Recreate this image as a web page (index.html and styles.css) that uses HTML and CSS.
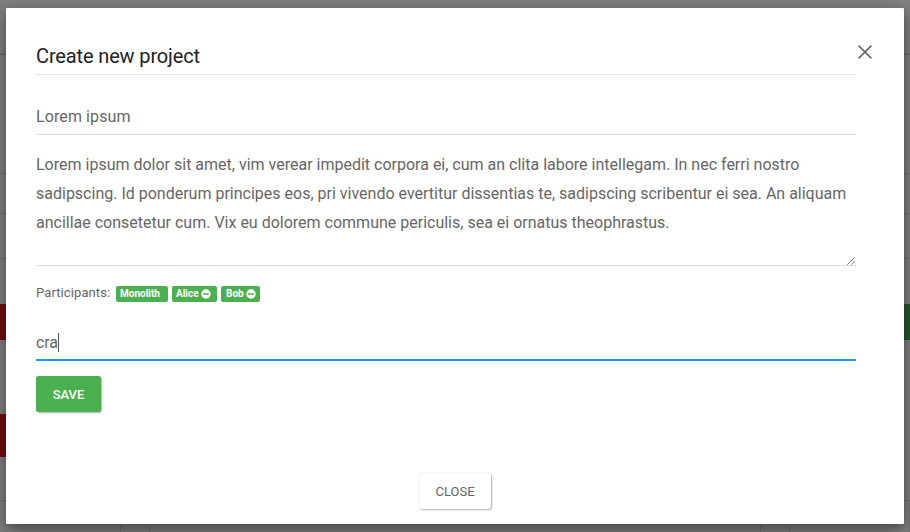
FILE: index.html
```html
<!DOCTYPE html>
<html lang="en">
<head>
<meta charset="utf-8">
<title>Create new project</title>
<link rel="stylesheet" href="styles.css">
</head>
<body>
<div class="page">
  <div class="band band-nav"></div>
  <div class="band band-head"></div>
  <div class="band band-row"></div>
  <div class="band band-filter"></div>
  <div class="band band-gap"></div>
  <div class="actions"><span class="danger"></span><span class="success"></span></div>
  <div class="band-space"></div>
  <div class="actions actions-tall"><span class="danger"></span></div>
  <div class="band band-last"></div>
  <div class="panels"><div class="panel"></div><div class="panel"></div><div class="panel"></div></div>
</div>
<main class="modal" role="dialog">
  <header class="header">
    <h1 class="title">Create new project</h1>
    <button class="dismiss" aria-label="Close">
      <svg width="14" height="14" viewBox="0 0 14 14"><path d="M.6.6 13.4 13.4M13.4.6.6 13.4"/></svg>
    </button>
  </header>
  <div class="form">
    <div class="field name">Lorem ipsum</div>
    <div class="field description">Lorem ipsum dolor sit amet, vim verear impedit corpora ei, cum an clita labore intellegam. In nec ferri nostro<br>sadipscing. Id ponderum principes eos, pri vivendo evertitur dissentias te, sadipscing scribentur ei sea. An aliquam<br>ancillae consetetur cum. Vix eu dolorem commune periculis, sea ei ornatus theophrastus.
      <svg class="grip" width="8" height="8" viewBox="0 0 8 8"><path d="M.3 7.7 7.7.3M4.3 7.7l3.4-3.4"/></svg>
    </div>
    <div class="participants">
      <span class="caption">Participants:</span>
      <span class="tag tag-owner">Monolith</span>
      <span class="tag tag-alice">Alice <svg width="10" height="10" viewBox="0 0 10 10"><circle cx="5" cy="5" r="4.7"/><path d="M2.2 5h5.6"/></svg></span>
      <span class="tag tag-bob">Bob <svg width="10" height="10" viewBox="0 0 10 10"><circle cx="5" cy="5" r="4.7"/><path d="M2.2 5h5.6"/></svg></span>
    </div>
    <div class="field search">cra<span class="caret"></span></div>
    <button class="btn save">SAVE</button>
  </div>
  <footer class="footer"><button class="btn close">CLOSE</button></footer>
</main>
</body>
</html>
```
FILE: styles.css
```css
* { box-sizing: border-box; }
body {
  margin: 0;
  height: 532px;
  overflow: hidden;
  position: relative;
  background: #808080;
  font-family: Roboto, sans-serif;
  font-size: 13px;
  letter-spacing: .1px;
  color: #666;
}
.page { height: 532px; display: flex; flex-direction: column; }
.band { border-bottom: 1px solid #6e6e6e; }
.band-nav { height: 55px; border-bottom-width: 2px; }
.band-head { height: 119px; }
.band-row { height: 40px; }
.band-filter { height: 45px; }
.band-gap { height: 45px; border: 0; }
.actions { height: 36px; display: flex; justify-content: space-between; }
.actions-tall { height: 43px; }
.danger, .success { width: 40px; }
.danger { background: #720c0c; }
.success { background: #26582a; }
.band-space { height: 74px; }
.band-last { height: 44px; }
.panels { flex: 1; display: grid; grid-template-columns: 121px 612px 121px; gap: 28px; }
.panel { border-right: 1px solid #727272; }
.panel + .panel { border-left: 1px solid #727272; }
.modal {
  position: absolute;
  inset: 8px 6px;
  background: #fff;
  border-radius: 1px;
  box-shadow: 0 5px 15px rgba(0, 0, 0, .5);
  display: flex;
  flex-direction: column;
  padding: 30px 48px 15px 30px;
}
.header { height: 37px; border-bottom: 1px solid #e5e5e5; display: flex; align-items: center; justify-content: space-between; }
.title { margin: 0; padding-bottom: 1px; font-size: 20px; font-weight: 400; letter-spacing: -.14px; color: #212121; }
button { font: inherit; letter-spacing: inherit; border: 0; }
.dismiss { width: 14px; height: 14px; padding: 0; background: none; margin: 0 -16px 9px 0; }
svg { display: block; fill: none; stroke: #666; }
.dismiss svg { stroke-width: 1.6; stroke: #666; }
.form { flex: 1; display: flex; flex-direction: column; }
.field { font-size: 16px; letter-spacing: .1px; border-bottom: 1px solid #ddd; white-space: nowrap; }
.name { height: 37px; margin-top: 23px; padding-top: 1px; line-height: 36px; }
.description { position: relative; height: 131px; padding-top: 15px; line-height: 29px; letter-spacing: 0; }
.grip { position: absolute; right: 1px; bottom: 0; stroke-width: .9; }
.participants { height: 16px; margin-top: 20px; display: flex; gap: 4px; align-items: center; }
.caption { width: 76px; line-height: 16px; position: relative; top: -1px; }
.tag {
  height: 16px;
  padding: 0 5px 0 4px;
  border-radius: 2px;
  background: #4caf50;
  color: #fff;
  font-size: 10px;
  font-weight: 700;
  letter-spacing: 0;
  line-height: 16px;
  display: flex;
  align-items: center;
  gap: 2px;
}
.tag-owner { width: 52px; }
.tag-alice { width: 45px; }
.tag-bob { width: 39px; padding: 0 4px 0 5px; }
.tag svg circle { fill: #fff; stroke: none; }
.tag svg path { stroke: #4caf50; stroke-width: 1.6; }
.search { height: 37px; margin-top: 22px; padding-top: 2px; border-bottom: 2px solid #2196f3; letter-spacing: -.1px; display: flex; align-items: center; }
.caret { width: 1px; height: 19px; background: #555; }
.btn { height: 36px; border-radius: 3px; box-shadow: 1px 1px 2px rgba(0, 0, 0, .3), 0 0 1px rgba(0, 0, 0, .25); padding: 0; }
.save { width: 65px; margin-top: 15px; background: #4caf50; color: #fff; font-weight: 500; letter-spacing: 0; }
.footer { display: flex; justify-content: center; margin-right: -17px; }
.close { width: 72px; background: #fff; color: #666; letter-spacing: 0; padding-left: 1px; }
```
